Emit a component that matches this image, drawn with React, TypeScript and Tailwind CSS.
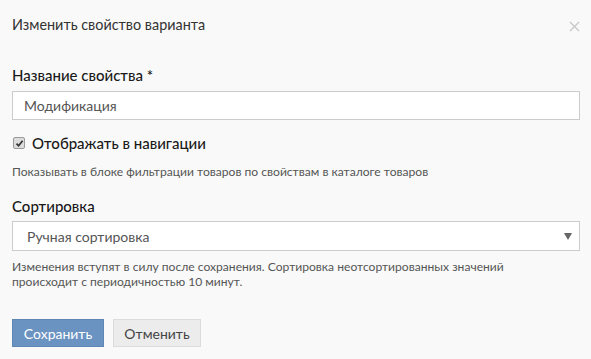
const font = { fontFamily: "Lato, 'Open Sans', sans-serif" };

export default function App() {
  return (
    <div className="min-h-screen w-full bg-[#f9f9f9] text-[#333]" style={font}>
      {/* Header */}
      <div className="flex items-center justify-between pl-3 pr-[11px] pt-[15px]">
        <h1 className="text-[14.4px] leading-5 text-[#333]">Изменить свойство варианта</h1>
        <svg width="11" height="11" viewBox="0 0 11 11" className="mt-[2px]">
          <path d="M1 1L10 10M10 1L1 10" stroke="#c8c8c8" strokeWidth="1.4" />
        </svg>
      </div>

      <div className="px-3 pt-[30px]">
        {/* Name */}
        <label className="block text-[15px] font-medium leading-5 text-[#1a1a1a]">Название свойства *</label>
        <input
          defaultValue="Модификация"
          className="mt-[6px] block h-[29px] w-[568px] border border-[#ccc] bg-white px-[11px] text-[14px] text-[#555] outline-none"
          style={font}
        />

        {/* Navigation checkbox */}
        <div className="mt-[13px] flex h-5 items-center">
          <span className="ml-px flex h-[12px] w-[12px] items-center justify-center rounded-[2px] border border-[#9a9a9a] bg-[#dcdcdc]">
            <svg width="9" height="9" viewBox="0 0 9 9">
              <path d="M1.5 4.6L3.6 6.8L7.6 1.8" fill="none" stroke="#333" strokeWidth="1.7" />
            </svg>
          </span>
          <span className="ml-[7px] text-[15px] font-medium leading-5 text-[#1a1a1a]">Отображать в навигации</span>
        </div>
        <p className="mt-[11px] text-[12.1px] leading-4 text-[#555]">
          Показывать в блоке фильтрации товаров по свойствам в каталоге товаров
        </p>

        {/* Sorting */}
        <label className="mt-[16px] block text-[15px] font-medium leading-5 text-[#1a1a1a]">Сортировка</label>
        <div className="mt-[5px] flex h-[30px] w-[568px] items-center justify-between border border-[#ccc] bg-white pl-[14px] pr-[7px]">
          <span className="text-[14px] text-[#555]">Ручная сортировка</span>
          <svg width="8" height="7" viewBox="0 0 8 7">
            <path d="M0 0H8L4 7Z" fill="#666" />
          </svg>
        </div>
        <p className="mt-[8px] text-[12.1px] leading-[15px] text-[#555]">
          Изменения вступят в силу после сохранения. Сортировка неотсортированных значений
          <br />
          происходит с периодичностью 10 минут.
        </p>

        {/* Buttons */}
        <div className="mt-[30px] flex gap-[9px]">
          <button className="h-[28px] w-[92px] border border-[#5f86b5] bg-[#6b93c2] text-[14px] text-white" style={font}>
            Сохранить
          </button>
          <button className="h-[28px] w-[88px] border border-[#dcdcdc] bg-[#ececec] text-[14px] text-[#444]" style={font}>
            Отменить
          </button>
        </div>
      </div>
    </div>
  );
}
